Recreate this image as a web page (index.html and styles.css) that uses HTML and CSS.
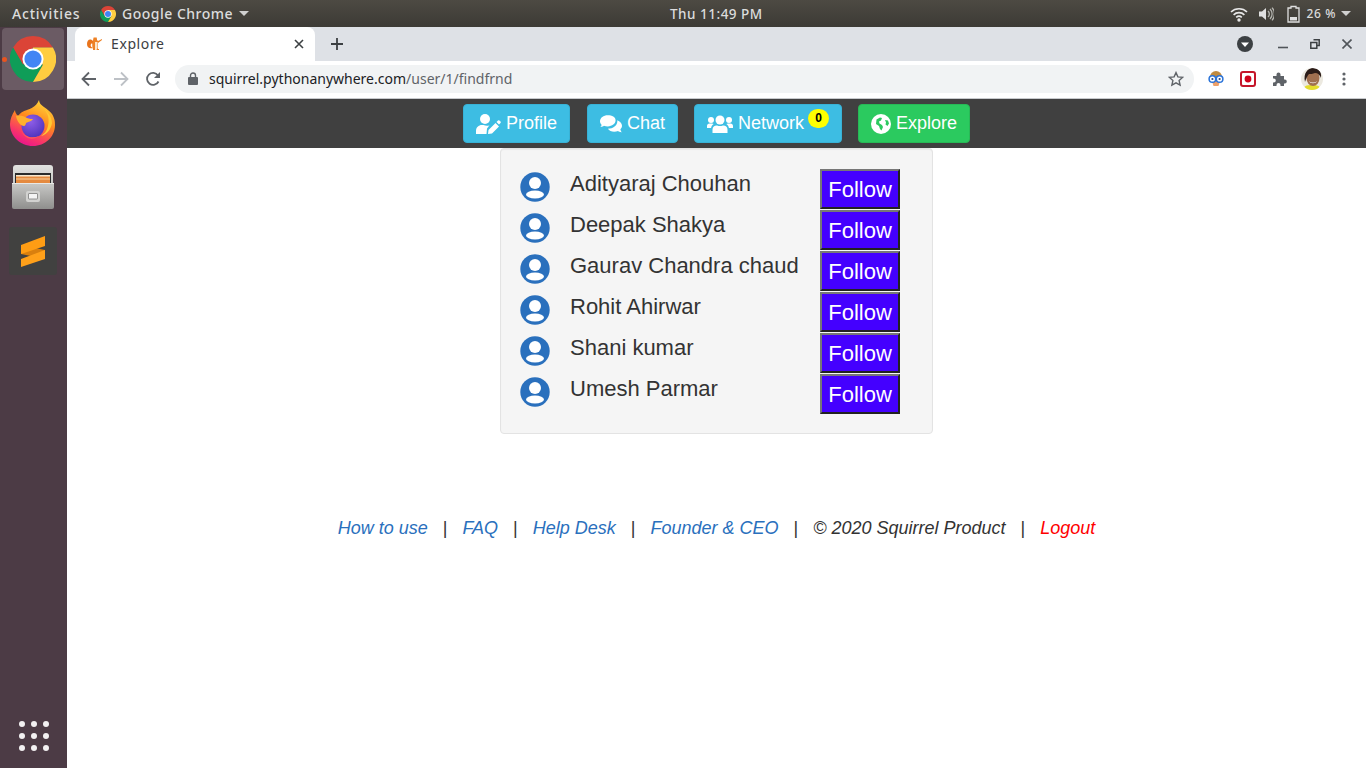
FILE: index.html
```html
<!DOCTYPE html>
<html lang="en">
<head>
    <meta charset="UTF-8">
    <title>Explore</title>
    <link rel="stylesheet" href="styles.css">
</head>
<body>

    <!-- Ubuntu top bar -->
    <div class="topbar">
        <div class="topbar-left">
            <span class="activities">Activities</span>
            <span class="app-name">
                <svg class="app-logo" viewBox="0 0 48 48"><use href="#chrome-logo"/></svg>
                Google Chrome
                <span class="caret"></span>
            </span>
        </div>
        <div class="clock">Thu 11:49 PM</div>
        <div class="tray">
            <svg width="18" height="16" viewBox="0 0 18 16"><path d="M1 6a11.500 11.500 0 0 1 16 0M3.600 8.800a8 8 0 0 1 10.800 0M6.200 11.400a4.300 4.300 0 0 1 5.600 0" fill="none" stroke="#e8e8e8" stroke-width="1.700"/><circle cx="9" cy="14" r="1.700" fill="#e8e8e8"/></svg>
            <svg width="16" height="16" viewBox="0 0 16 16"><path d="M1 5.500h3l4-3.500v12l-4-3.500H1z" fill="#e0e0e0"/><path d="M10 5a4 4 0 0 1 0 6M12 3a7 7 0 0 1 0 10M14 1.600a9.500 9.500 0 0 1 0 12.800" fill="none" stroke="#b5b5b0" stroke-width="1.300"/></svg>
            <svg class="battery" width="13" height="18" viewBox="0 0 13 18"><path d="M4 1.500h5v1.500h3v14H1V3h3z" fill="none" stroke="#e0e0e0" stroke-width="1.300"/><rect x="3" y="12" width="7" height="3.500" fill="#e0e0e0"/></svg>
            <span class="percent">26 %</span>
            <span class="caret"></span>
        </div>
    </div>

    <div class="desktop">
        <!-- dock -->
        <aside class="dock">
            <div class="dock-apps">
                <div class="dock-item active">
                    <span class="running-dot"></span>
                    <svg width="46" height="46" viewBox="0 0 48 48">
                        <defs>
                            <g id="chrome-logo">
                                <path d="M24 0A24 24 0 0 0 3.200 12l10.400 18L24 12h20.800A24 24 0 0 0 24 0z" fill="#db4437"/>
                                <path d="M3.200 12 13.600 30 24 24l10.400 6L24 48A24 24 0 0 1 3.200 12z" fill="#0f9d58"/>
                                <path d="M44.800 12H24v12l10.400 6L24 48A24 24 0 0 0 44.800 12z" fill="#ffcd40"/>
                                <circle cx="24" cy="24" r="11" fill="#fff"/>
                                <circle cx="24" cy="24" r="9" fill="#4285f4"/>
                            </g>
                        </defs>
                        <use href="#chrome-logo"/>
                    </svg>
                </div>
                <div class="dock-item">
                    <svg width="46" height="46" viewBox="0 0 46 46">
                        <defs>
                            <linearGradient id="fox" x1="0.8" y1="0" x2="0.35" y2="1">
                                <stop offset="0" stop-color="#ffdc3c"/>
                                <stop offset="0.45" stop-color="#ff8a1e"/>
                                <stop offset="0.8" stop-color="#f8346a"/>
                                <stop offset="1" stop-color="#e9168c"/>
                            </linearGradient>
                            <radialGradient id="fox-globe" cx="0.4" cy="0.3" r="0.8">
                                <stop offset="0" stop-color="#8f5ee8"/>
                                <stop offset="1" stop-color="#4a30b8"/>
                            </radialGradient>
                        </defs>
                        <path d="M29 0c0 6 9 8 13 14 3 5 3 8 3 11 0 12-10 21-22 21C10 46 0 36 0 24c0-5 2-9 5-14 0 2 1 4 3 6 2-3 5-5 9-6 3-1 9-3 12-10z" fill="url(#fox)"/>
                        <circle cx="23" cy="26" r="11.500" fill="url(#fox-globe)"/>
                        <path d="M6 16c4-1 8 0 11 2 2 1 5 1 6 1-2 3-6 3-7 4 0 1-1 3-2 3-3 0-7-4-8-10z" fill="#ffb02e"/>
                        <path d="M29 6c8 3 11 11 9 20-1 5-4 8-7 10 5-1 10-6 11-13 0-7-6-14-13-17z" fill="#ffc934"/>
                        <path d="M11 30c3 7 11 9 18 6-6 5-15 3-18-6z" fill="#ff5a5a"/>
                    </svg>
                </div>
                <div class="dock-item">
                    <svg width="42" height="44" viewBox="0 0 42 44">
                        <defs>
                            <linearGradient id="cab-top" x1="0" y1="0" x2="0" y2="1">
                                <stop offset="0" stop-color="#e2e2e0"/>
                                <stop offset="1" stop-color="#a8a8a6"/>
                            </linearGradient>
                            <linearGradient id="cab-front" x1="0" y1="0" x2="0" y2="1">
                                <stop offset="0" stop-color="#c9c9c7"/>
                                <stop offset="1" stop-color="#8f8f8d"/>
                            </linearGradient>
                        </defs>
                        <path d="M1 3a3 3 0 0 1 3-3h34a3 3 0 0 1 3 3v38H1z" fill="url(#cab-top)"/>
                        <rect x="3" y="8" width="36" height="12" fill="#2b2b2b"/>
                        <rect x="4" y="11" width="34" height="7" fill="#e58a3f"/>
                        <rect x="4" y="10" width="34" height="1.500" fill="#f7e6cc"/>
                        <rect x="4" y="13.500" width="34" height="1" fill="#f9cf9c"/>
                        <path d="M0 18h42v24a2 2 0 0 1-2 2H2a2 2 0 0 1-2-2z" fill="url(#cab-front)"/>
                        <rect x="0" y="18" width="42" height="1" fill="#e8e8e6"/>
                        <rect x="14" y="26" width="14" height="11" rx="2" fill="#d2d2d0"/>
                        <rect x="16.500" y="28.500" width="9" height="5.500" rx="0.500" fill="#f4f4f4" stroke="#6f6f6f" stroke-width="0.700"/>
                    </svg>
                </div>
                <div class="dock-item">
                    <svg width="48" height="48" viewBox="0 0 48 48">
                        <rect width="48" height="48" rx="3" fill="#414140"/>
                        <path d="M12 18 36 23v9L12 27z" fill="#d97f0e"/>
                        <path d="M12 18 36 9v10l-24 8z" fill="#ff9d14"/>
                        <path d="M12 32 36 23v9l-24 8z" fill="#ffa01a"/>
                    </svg>
                </div>
            </div>
            <div class="app-grid">
                <span></span><span></span><span></span>
                <span></span><span></span><span></span>
                <span></span><span></span><span></span>
            </div>
        </aside>

        <div class="browser">
            <!-- tabs -->
            <div class="tabstrip">
                <div class="tab">
                    <svg class="favicon" width="16" height="16" viewBox="0 0 16 16">
                        <path d="M6 5C3 2 0 4 0 8c0 4 3 5 6 4-2-1-3-2-2-4 1-1 2 0 2 1z" fill="#e9741c"/>
                        <path d="M6 6c0-2 0-3 1-5l1 1 1-1c1 1 1 2 1 3l1 1 4-2v1l-4 3v6h1v1H6v-1c-1-2-1-5 0-8z" fill="#ee8226"/>
                        <path d="M8 6h2.500v6L9.500 14H8z" fill="#fbe6cb"/>
                    </svg>
                    <span class="tab-title">Explore</span>
                    <svg class="tab-close" width="10" height="10" viewBox="0 0 10 10"><path d="M1 1l8 8M9 1 1 9" stroke="#3c4043" stroke-width="1.600"/></svg>
                </div>
                <svg class="new-tab" width="12" height="12" viewBox="0 0 12 12"><path d="M6 0v12M0 6h12" stroke="#3c4043" stroke-width="1.800"/></svg>
                <div class="window-controls">
                    <svg width="16" height="16" viewBox="0 0 16 16"><circle cx="8" cy="8" r="8" fill="#3c4043"/><path d="M4 6.500h8L8 11z" fill="#fff"/></svg>
                    <svg class="ctl-min" width="10" height="10" viewBox="0 0 10 10"><path d="M0 8.500h10" stroke="#50555a" stroke-width="1.600"/></svg>
                    <svg class="ctl-max" width="10" height="10" viewBox="0 0 10 10"><path d="M3.500 .8h5.700v5.700H7.200M.8 3.500h6v5.700h-6z" fill="none" stroke="#3c4043" stroke-width="1.500"/></svg>
                    <svg class="ctl-close" width="10" height="10" viewBox="0 0 10 10"><path d="M.5.5l9 9M9.500.5l-9 9" stroke="#50555a" stroke-width="1.600"/></svg>
                </div>
            </div>

            <!-- toolbar -->
            <div class="toolbar">
                <svg class="nav-btn" width="16" height="16" viewBox="0 0 16 16"><path d="M15 8H2M8 1.500 1.500 8 8 14.500" fill="none" stroke="#5f6368" stroke-width="1.800"/></svg>
                <svg class="nav-btn" width="16" height="16" viewBox="0 0 16 16"><path d="M1 8h13M8 1.500 14.500 8 8 14.500" fill="none" stroke="#bdc1c6" stroke-width="1.800"/></svg>
                <svg class="nav-btn" width="16" height="16" viewBox="0 0 16 16"><path d="M13.500 10.500A6 6 0 1 1 13 4.500" fill="none" stroke="#5f6368" stroke-width="1.800"/><path d="M15 1v6H9z" fill="#5f6368"/></svg>
                <div class="omnibox">
                    <svg class="lock" width="10" height="13" viewBox="0 0 10 13"><path d="M2.500 5V3.500a2.500 2.500 0 0 1 5 0V5" fill="none" stroke="#5f6368" stroke-width="1.400"/><rect y="5" width="10" height="8" rx="1" fill="#5f6368"/></svg>
                    <span class="url">squirrel.pythonanywhere.com<span class="url-path">/user/1/findfrnd</span></span>
                    <svg class="star" width="16" height="16" viewBox="0 0 16 16"><path d="m8 1.600 1.900 4.300 4.700.5-3.500 3.100 1 4.600L8 11.800l-4.100 2.300 1-4.600L1.400 6.400l4.700-.5z" fill="none" stroke="#5f6368" stroke-width="1.400"/></svg>
                </div>
                <div class="extensions">
                    <svg width="18" height="17" viewBox="0 0 18 17"><path d="M3 7a6 6 0 0 1 12 0v2H3z" fill="#c08a3e"/><path d="M5 11h8l-1.500 5h-5z" fill="#eda06a"/><circle cx="5.400" cy="9" r="3.300" fill="#fff" stroke="#2a73d9" stroke-width="1.500"/><circle cx="12.600" cy="9" r="3.300" fill="#fff" stroke="#2a73d9" stroke-width="1.500"/><circle cx="5.400" cy="9" r="1.100" fill="#2a4a80"/><circle cx="12.600" cy="9" r="1.100" fill="#2a4a80"/></svg>
                    <svg width="16" height="16" viewBox="0 0 16 16"><rect x="1" y="1" width="14" height="14" rx="2" fill="#fff" stroke="#c5162a" stroke-width="2"/><circle cx="8" cy="8" r="3.400" fill="#d0021b"/></svg>
                    <svg width="16" height="16" viewBox="0 0 16 16"><path d="M1 5h3.500V3.500a2 2 0 0 1 4 0V5H12v3.500h.8a2 2 0 0 1 0 4H12V15H8.500v-1a2 2 0 0 0-4 0v1H1v-3.500h.8a2 2 0 0 0 0-4H1z" fill="#5f6368"/></svg>
                    <svg width="22" height="22" viewBox="0 0 22 22"><defs><clipPath id="face"><circle cx="11" cy="11" r="11"/></clipPath></defs><g clip-path="url(#face)"><rect width="22" height="22" fill="#ece9e0"/><path d="M2 22c1-4 3-5 9-5s8 1 9 5z" fill="#e5dc2c"/><ellipse cx="12" cy="10" rx="6.500" ry="8" fill="#a06f4f"/><path d="M4 14C2 5 7 0 12 0s9 3 8 10c-1-3-3-5-6-5-2 1-5 1-6 1-2 2-3 5-4 8z" fill="#2b1c18"/><path d="M8 13c2 2 6 2 8 0-1 3-7 3-8 0z" fill="#fff"/></g></svg>
                    <svg class="menu-dots" width="4" height="14" viewBox="0 0 4 14"><circle cx="2" cy="2" r="1.600" fill="#5f6368"/><circle cx="2" cy="7" r="1.600" fill="#5f6368"/><circle cx="2" cy="12" r="1.600" fill="#5f6368"/></svg>
                </div>
            </div>

            <!-- the page itself -->
            <div class="page">
                <nav class="navbar">
                    <a class="btn btn-info">
                        <svg class="btn-icon" width="25" height="20" viewBox="0 0 25 20"><circle cx="9" cy="5" r="5" fill="#fff"/><path d="M0 20v-3c0-3.500 2.500-6 6-6h1.500c1 .5 2.200.7 3.500.7s1.500 0 2.500-.5L11 14.500 10.500 20z" fill="#fff"/><path d="m12.500 16 7-7 3.500 3.500-7 7-4 .5zM20.500 8l1.500-1.500a1 1 0 0 1 1.400 0l1.100 1.100a1 1 0 0 1 0 1.400L23 10.500z" fill="#fff"/></svg>
                        Profile
                    </a>
                    <a class="btn btn-info btn-chat">
                        <svg class="btn-icon" width="22" height="18" viewBox="0 0 24 19"><path d="M8.500 0C3.800 0 0 2.900 0 6.500c0 1.500.7 2.900 1.800 4-.4 1.100-1.500 2-1.600 2.100 2 .1 3.300-.6 4.100-1.300 1.300.5 2.700.8 4.200.8 4.700 0 8.500-2.900 8.500-6.600S13.200 0 8.500 0z" fill="#fff"/><path d="M22.200 15.300c1.100-1.100 1.800-2.500 1.800-4 0-2.700-2.200-5-5.200-6 .1.400.1.800.1 1.200 0 4.600-4.600 8.100-10.300 8.200C10 16.700 12.500 18 15.500 18c1.500 0 2.900-.3 4.200-.8.800.7 2.100 1.400 4.100 1.300-.1-.1-1.200-1-1.600-3.200z" fill="#fff"/></svg>
                        Chat
                    </a>
                    <a class="btn btn-info btn-network">
                        <svg class="btn-icon" width="26" height="18" viewBox="0 0 26 18"><circle cx="4" cy="5" r="3" fill="#fff"/><circle cx="22" cy="5" r="3" fill="#fff"/><circle cx="13" cy="5" r="4.500" fill="#fff"/><path d="M0 13v-2c0-1.500 1-2.500 2.500-2.500H5c.6 0 1.200.2 1.700.6C5.200 10 4.300 11.300 4.100 13zM26 13v-2c0-1.500-1-2.500-2.500-2.500H21c-.6 0-1.200.2-1.700.6 1.500.9 2.400 2.200 2.600 3.900z" fill="#fff"/><path d="M5.500 18v-3.500c0-2.500 2-4 4-4h.7c.9.400 1.800.6 2.800.6s1.900-.2 2.800-.6h.7c2 0 4 1.500 4 4V18z" fill="#fff"/></svg>
                        Network
                        <span class="badge">0</span>
                    </a>
                    <a class="btn btn-success">
                        <svg class="btn-icon" width="20" height="20" viewBox="0 0 20 20"><circle cx="10" cy="10" r="10" fill="#fff"/><path d="M5.500 5.500 9 3.500l2 .5-1 2.500L8 7.500l.5 2L11 11l1 2-1.500 3.500L9 15l-1-3-3-2z" fill="#2bca5f"/><path d="m14 6 3 .5 1 3-1.500 2.500-2-1.500.5-2z" fill="#2bca5f"/></svg>
                        Explore
                    </a>
                </nav>

                <div class="well">
                    <div class="person">
                        <svg class="avatar" viewBox="0 0 30 30"><use href="#avatar-icon"/></svg>
                        <span class="person-name">Adityaraj Chouhan</span>
                        <button class="follow">Follow</button>
                    </div>
                    <div class="person">
                        <svg class="avatar" viewBox="0 0 30 30"><use href="#avatar-icon"/></svg>
                        <span class="person-name">Deepak Shakya</span>
                        <button class="follow">Follow</button>
                    </div>
                    <div class="person">
                        <svg class="avatar" viewBox="0 0 30 30"><use href="#avatar-icon"/></svg>
                        <span class="person-name">Gaurav Chandra chaud</span>
                        <button class="follow">Follow</button>
                    </div>
                    <div class="person">
                        <svg class="avatar" viewBox="0 0 30 30"><use href="#avatar-icon"/></svg>
                        <span class="person-name">Rohit Ahirwar</span>
                        <button class="follow">Follow</button>
                    </div>
                    <div class="person">
                        <svg class="avatar" viewBox="0 0 30 30"><use href="#avatar-icon"/></svg>
                        <span class="person-name">Shani kumar</span>
                        <button class="follow">Follow</button>
                    </div>
                    <div class="person">
                        <svg class="avatar" viewBox="0 0 30 30"><use href="#avatar-icon"/></svg>
                        <span class="person-name">Umesh Parmar</span>
                        <button class="follow">Follow</button>
                    </div>
                </div>

                <footer class="footer">
                    <a class="link">How to use</a>
                    <span class="sep">|</span>
                    <a class="link">FAQ</a>
                    <span class="sep">|</span>
                    <a class="link">Help Desk</a>
                    <span class="sep">|</span>
                    <a class="link">Founder &amp; CEO</a>
                    <span class="sep">|</span>
                    <span class="copy">© 2020 Squirrel Product</span>
                    <span class="sep">|</span>
                    <a class="link logout">Logout</a>
                </footer>
            </div>
        </div>
    </div>

    <svg class="defs" width="0" height="0">
        <defs>
            <g id="avatar-icon">
                <circle cx="15" cy="15" r="14.700" fill="#2a70bd"/>
                <circle cx="15" cy="11" r="6" fill="#fff"/>
                <ellipse cx="15" cy="22.500" rx="9" ry="4" fill="#fff"/>
            </g>
        </defs>
    </svg>

</body>
</html>
```

FILE: styles.css
```css
html, body {
    margin: 0;
    padding: 0;
    height: 100%;
}

body {
    width: 1366px;
    height: 768px;
    overflow: hidden;
    display: flex;
    flex-direction: column;
    font-family: "Liberation Sans", Arial, sans-serif;
    background-color: #fff;
}

.defs {
    position: fixed;
    width: 0;
    height: 0;
}

/* top bar */
.topbar {
    height: 27px;
    flex-shrink: 0;
    display: grid;
    grid-template-columns: 670px auto 1fr;
    align-items: center;
    background: linear-gradient(#4d4a43, #3c3a35);
    color: #dcdcdc;
    font-family: "Noto Sans", sans-serif;
    font-size: 14px;
    font-weight: 500;
}

.topbar-left {
    display: flex;
    align-items: center;
    padding-left: 12px;
}

.activities {
    width: 88px;
    letter-spacing: 0.8px;
}

.app-name {
    display: flex;
    align-items: center;
    letter-spacing: 0.5px;
}

.app-logo {
    width: 16px;
    height: 16px;
    margin-right: 6px;
}

.caret {
    display: inline-block;
    margin-left: 6px;
    border-left: 5px solid transparent;
    border-right: 5px solid transparent;
    border-top: 5px solid #d0d0d0;
}

.clock {
    letter-spacing: 0.5px;
    font-size: 13.5px;
}

.tray {
    display: flex;
    align-items: center;
    justify-content: flex-end;
    gap: 10px;
    padding-right: 15px;
}

.battery {
    margin-left: 3px;
}

.percent {
    font-size: 12px;
    margin-left: -3px;
    letter-spacing: 0.6px;
}

.tray .caret {
    margin-left: -5px;
}

/* dock */
.desktop {
    flex: 1;
    display: flex;
    min-height: 0;
}

.dock {
    width: 67px;
    flex-shrink: 0;
    background-color: #4c3b45;
    display: flex;
    flex-direction: column;
    justify-content: space-between;
    align-items: center;
}

.dock-apps {
    align-self: flex-start;
    padding: 1px 0 0 2px;
    display: flex;
    flex-direction: column;
    gap: 2px;
}

.dock-item {
    position: relative;
    width: 62px;
    height: 62px;
    border-radius: 4px;
    display: flex;
    align-items: center;
    justify-content: center;
}

.dock-item.active {
    background-color: #6b5b64;
}

.running-dot {
    position: absolute;
    left: 0;
    top: 29px;
    width: 5px;
    height: 5px;
    border-radius: 50%;
    background-color: #e9541f;
}

.app-grid {
    display: grid;
    grid-template-columns: repeat(3, 6px);
    gap: 6px;
    margin-bottom: 17px;
}

.app-grid span {
    width: 6px;
    height: 6px;
    border-radius: 50%;
    background-color: #f2f0f1;
}

/* chrome */
.browser {
    flex: 1;
    display: flex;
    flex-direction: column;
    min-width: 0;
}

.tabstrip {
    height: 34px;
    flex-shrink: 0;
    background-color: #dee1e6;
    display: flex;
    align-items: flex-end;
    padding-left: 8px;
}

.tab {
    width: 240px;
    height: 34px;
    box-sizing: border-box;
    background-color: #fff;
    border-radius: 8px 8px 0 0;
    display: flex;
    align-items: center;
    padding: 0 11px 1px 12px;
}

.favicon {
    margin-right: 8px;
}

.tab-title {
    flex: 1;
    font-family: "Noto Sans", sans-serif;
    font-size: 14px;
    color: #3c4043;
    letter-spacing: 0.6px;
}

.new-tab {
    margin: 0 0 11px 16px;
}

.window-controls {
    margin-left: auto;
    align-self: center;
    display: flex;
    align-items: center;
    padding-right: 14px;
}

.ctl-min {
    margin-left: 25px;
}

.ctl-max {
    margin-left: 22px;
}

.ctl-close {
    margin-left: 22px;
}

.toolbar {
    height: 38px;
    flex-shrink: 0;
    box-sizing: border-box;
    background-color: #fff;
    border-bottom: 1px solid #c8cacd;
    display: flex;
    align-items: center;
    padding: 0 0 2px 14px;
}

.nav-btn {
    margin-right: 16px;
}

.omnibox {
    width: 1019px;
    height: 28px;
    margin-left: -2px;
    border-radius: 14px;
    background-color: #f1f3f4;
    display: flex;
    align-items: center;
    padding: 0 10px 0 13px;
    box-sizing: border-box;
}

.lock {
    margin-right: 11px;
}

.url {
    flex: 1;
    font-family: "Noto Sans", sans-serif;
    font-size: 14px;
    color: #202124;
}

.url-path {
    color: #5f6368;
}

.extensions {
    display: flex;
    align-items: center;
    padding-left: 13px;
}

.extensions svg {
    margin-right: 16px;
}

.extensions svg:nth-child(1) {
    margin-right: 15px;
}

.extensions svg:nth-child(4) {
    margin: 0 19px 0 -3px;
}

/* page */
.page {
    flex: 1;
    display: flex;
    flex-direction: column;
    align-items: center;
    background-color: #fff;
}

.navbar {
    width: 100%;
    height: 49px;
    box-sizing: border-box;
    background-color: #404040;
    display: flex;
    justify-content: center;
    align-items: flex-start;
    gap: 16px;
    padding-top: 5px;
}

.btn {
    height: 39px;
    box-sizing: border-box;
    display: flex;
    align-items: center;
    padding: 0 12px;
    border: 1px solid transparent;
    border-radius: 4px;
    font-size: 18px;
    color: #fff;
}

.btn-info {
    background-color: #3dbde3;
    border-color: #38b2d6;
}

.btn-chat {
    margin-left: 1px;
}

.btn-success {
    background-color: #2bca5f;
    border-color: #27b956;
}

.btn-icon {
    margin-right: 5px;
}

.badge {
    align-self: flex-start;
    margin: 4px 0 0 4px;
    width: 21px;
    height: 19px;
    border-radius: 10px;
    background-color: #ffff00;
    color: #000;
    font-size: 12px;
    font-weight: bold;
    line-height: 19px;
    text-align: center;
}

.well {
    width: 433px;
    height: 286px;
    box-sizing: border-box;
    padding: 20px 32px 0 19px;
    background-color: #f5f5f5;
    border: 1px solid #e3e3e3;
    border-radius: 4px;
    box-shadow: inset 0 1px 1px rgba(0, 0, 0, 0.05);
}

.person {
    height: 41px;
    display: flex;
    align-items: flex-start;
}

.avatar {
    width: 30px;
    height: 30px;
    margin-top: 3px;
    flex-shrink: 0;
}

.person-name {
    flex: 1;
    margin-left: 20px;
    font-size: 22px;
    line-height: 30px;
    color: #333;
}

.follow {
    width: 80px;
    height: 40px;
    box-sizing: border-box;
    padding: 1px 0 0;
    border: 2px outset #777;
    background-color: #4400ff;
    color: #fff;
    font-family: "Liberation Sans", Arial, sans-serif;
    font-size: 22px;
}

.footer {
    display: flex;
    gap: 15px;
    margin-top: 82px;
    font-size: 18px;
    font-style: italic;
    line-height: 24px;
    color: #333;
}

.link {
    color: #2a70bd;
}

.sep {
    font-style: normal;
}

.logout {
    color: #f00;
}
```
